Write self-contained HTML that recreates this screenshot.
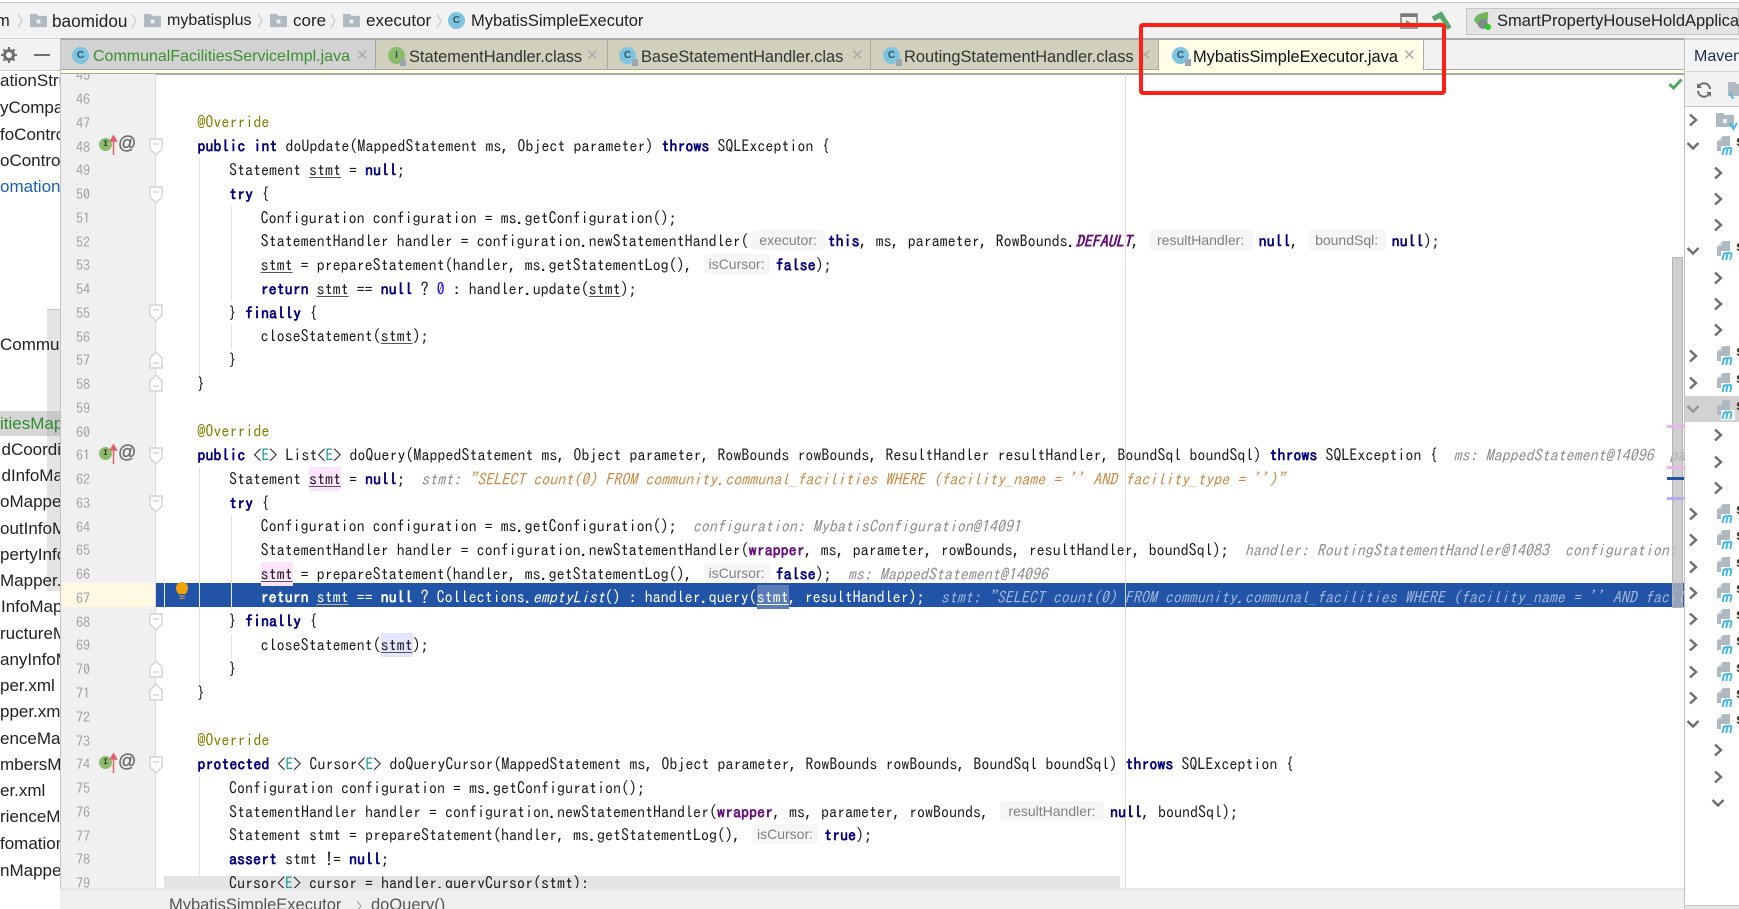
<!DOCTYPE html>
<html><head><meta charset="utf-8"><title>MybatisSimpleExecutor</title>
<style>
html,body{margin:0;padding:0;width:1739px;height:909px;overflow:hidden;background:#fff}
body{position:relative;font-family:"Liberation Sans",sans-serif;color:#222}
.a{position:absolute;white-space:pre}
.s{font-size:16.500px;line-height:20px;color:#222}
svg{position:absolute;overflow:visible}
#code{position:absolute;left:0;top:0;width:1739px;height:909px;overflow:hidden;clip-path:inset(74px 55px 21px 155px)}
.l{position:absolute;white-space:pre;left:calc(197.4px + var(--i,0)*31.6px);top:calc(86.7px + var(--n)*23.76px);font-family:"IPAGothic","Liberation Mono",monospace;font-size:16px;line-height:24px;height:24px;color:#1a1a1a}
.n{position:absolute;left:76px;width:16px;top:calc(87px + var(--n)*23.76px);font-family:"IPAGothic","Liberation Mono",monospace;font-size:14px;line-height:24px;color:#a0a0a0}
.k{color:#000080;font-weight:bold}
.an{color:#808000}
.e{color:#20999d}
.g{color:#8c8c8c;font-style:italic}
.o{color:#cc8a45;font-style:italic}
.p{color:#660e7a;font-weight:bold}
.u{text-decoration:underline;text-decoration-color:#555}
.hp{background:#fce4fc;display:inline-block;height:24px}
.hv{background:#e4e4ff;display:inline-block;height:24px}
.h{display:inline-block;height:20px;line-height:20px;background:#f6f6f6;border-radius:4px;font-family:"Liberation Sans",sans-serif;font-size:14px;color:#808080;text-align:center;vertical-align:top;margin-top:1px}
.t{position:absolute;top:40px;height:29px;background:#d0d0bc;border-right:1px solid #a9a9a0}
.tt{position:absolute;top:47px;font-size:16.400px;line-height:20px;white-space:pre;color:#333}
.x{position:absolute;top:46px;font-size:15px;line-height:20px;color:#aaa}
.ci{position:absolute;width:17px;height:17px;border-radius:50%;background:#7fc4de;font-size:10px;line-height:17px;text-align:center;font-weight:bold;color:#2c5566}
.ci.i{background:#8cbc6a}
.lk{position:absolute;width:6px;height:7px;background:#9aa7b0}
.ic{position:absolute;width:13px;height:13px;border-radius:50%;background:#8cbc6a;font:bold 8px/13px "Liberation Mono",monospace;text-align:center;color:#333;left:99px}
.at{position:absolute;left:118px;font-size:18px;line-height:20px;color:#6e6e6e;-webkit-text-stroke:.4px #6e6e6e}
.ig{position:absolute;width:1px;background:#e2e2e2}
.lt{position:absolute;left:0;width:60px;overflow:hidden;font-size:17px;line-height:22px;white-space:pre;color:#222}
.q{position:absolute;left:1736px;width:3px;height:16px;overflow:hidden;font-size:15px;line-height:16px;font-weight:bold;color:#3a3020}
</style></head><body>
<svg width="0" height="0" style="position:absolute">
<defs>
<symbol id="fd" viewBox="0 0 14 18"><path d="M1 1H13V11L7 17L1 11Z" fill="#fff" stroke="#d2d2d2" stroke-width="1.4"/><path d="M4 6H10" stroke="#c0c0c0"/></symbol>
<symbol id="fu" viewBox="0 0 14 18"><path d="M1 17H13V7L7 1L1 7Z" fill="#fff" stroke="#d2d2d2" stroke-width="1.4"/><path d="M4 12H10" stroke="#c0c0c0"/></symbol>
<symbol id="folder" viewBox="0 0 18 16"><path d="M0 1H7L9 3H18V15H0Z" fill="#aeb9c0"/><rect x="7" y="7" width="4" height="4" fill="#eef1f3"/></symbol>
<symbol id="cr" viewBox="0 0 10 14"><path d="M2 1.5L8 7L2 12.5" fill="none" stroke="#6e6e6e" stroke-width="2.4"/></symbol>
<symbol id="cd" viewBox="0 0 14 10"><path d="M1.5 2L7 7.5L12.5 2" fill="none" stroke="#6e6e6e" stroke-width="2.4"/></symbol>
<symbol id="mf" viewBox="0 0 18 20"><path d="M6 0H13V15H0V6Z" fill="#aeb9c0"/><path d="M5 0.500V5H0.500Z" fill="#cfd6da"/><rect x="4" y="10" width="14" height="10" fill="#fff"/><path d="M5.500 19L7 12M7 13.500Q9.500 10.500 10.500 13L9.200 19M10.500 13Q13.500 10.500 14.500 13L13.200 19" fill="none" stroke="#38b5ea" stroke-width="1.800"/></symbol>
</defs></svg>

<!-- top bar -->
<div class="a" style="left:0;top:0;width:1739px;height:38px;background:#f2f2f2;border-top:2px solid #fff;box-sizing:border-box"></div>
<div class="a" style="left:0;top:2px;width:1739px;height:1px;background:#c8c8c8"></div>
<div class="a s" style="left:0;top:11px;width:14px;overflow:hidden;text-indent:-4px">m</div>
<svg style="left:17px;top:13px" width="6" height="16"><path d="M1 1L5 8L1 15" fill="none" stroke="#c4c4c4"/></svg>
<svg style="left:30px;top:13px" width="17" height="15"><use href="#folder"/></svg><div class="a s" style="left:52px;top:11px;font-size:17.200px">baomidou</div>
<svg style="left:131px;top:13px" width="6" height="16"><path d="M1 1L5 8L1 15" fill="none" stroke="#c4c4c4"/></svg>
<svg style="left:144px;top:13px" width="17" height="15"><use href="#folder"/></svg><div class="a s" style="left:167px;top:11px;font-size:16px">mybatisplus</div>
<svg style="left:257px;top:13px" width="6" height="16"><path d="M1 1L5 8L1 15" fill="none" stroke="#c4c4c4"/></svg>
<svg style="left:270px;top:13px" width="17" height="15"><use href="#folder"/></svg><div class="a s" style="left:293px;top:11px;font-size:17px">core</div>
<svg style="left:330px;top:13px" width="6" height="16"><path d="M1 1L5 8L1 15" fill="none" stroke="#c4c4c4"/></svg>
<svg style="left:343px;top:13px" width="17" height="15"><use href="#folder"/></svg><div class="a s" style="left:366px;top:11px;font-size:17px">executor</div>
<svg style="left:436px;top:13px" width="6" height="16"><path d="M1 1L5 8L1 15" fill="none" stroke="#c4c4c4"/></svg>
<div class="ci" style="left:448px;top:12px">C</div><div class="a s" style="left:471px;top:11px">MybatisSimpleExecutor</div>
<svg style="left:1400px;top:13px" width="18" height="16"><rect x="1" y="1" width="16" height="14" fill="none" stroke="#7a7a7a" stroke-width="1.500"/><rect x="1" y="1" width="16" height="3" fill="#7a7a7a"/><path d="M6 7L11 10L6 13Z" fill="#6aa85a"/></svg>
<svg style="left:1432px;top:12px" width="20" height="20"><path d="M1 7L11 1.500" fill="none" stroke="#59a869" stroke-width="5"/><path d="M9 3L17.500 16.500" fill="none" stroke="#59a869" stroke-width="5"/></svg>
<div class="a" style="left:1466px;top:8px;width:273px;height:27px;background:#e4e4e4;border:1px solid #c4c4c4;box-sizing:border-box"></div>
<svg style="left:1473px;top:11px" width="20" height="20"><path d="M1 9Q3 2 15 1Q16 10 12 14Q5 17 1 9Z" fill="#6fb35a"/><circle cx="10" cy="13" r="5" fill="#7d8a92"/><circle cx="15" cy="16" r="3" fill="#22cc22"/></svg>
<div class="a s" style="left:1497px;top:11px;width:242px;overflow:hidden">SmartPropertyHouseHoldApplication</div>

<!-- left panel -->
<div class="a" style="left:0;top:38px;width:60px;height:33px;background:#f2f2f2;border-top:1px solid #d4d4d4;box-sizing:border-box"></div>
<div class="a" style="left:0;top:70px;width:60px;height:1px;background:#c8c8c8"></div>
<svg style="left:1px;top:47px" width="16" height="16"><circle cx="8" cy="8" r="4.500" fill="none" stroke="#6e6e6e" stroke-width="3"/><path d="M8 0V16M0 8H16M2.300 2.300L13.700 13.700M13.700 2.300L2.300 13.700" stroke="#6e6e6e" stroke-width="2" stroke-dasharray="2.500 11"/></svg>
<div class="a" style="left:34px;top:54px;width:16px;height:2px;background:#6e6e6e"></div>
<div class="a" style="left:47px;top:309px;width:13px;height:282px;background:#e4e4e4;border-top:1px solid #c8c8c8;box-sizing:border-box"></div>
<div class="a" style="left:0;top:411px;width:60px;height:25px;background:#d6d6d6"></div>
<div class="a" style="left:47px;top:411px;width:13px;height:25px;background:#c8c8c8"></div>
<div class="lt" style="top:70px">ationStructure</div>
<div class="lt" style="top:97px">yCompany</div>
<div class="lt" style="top:124px">foController</div>
<div class="lt" style="top:150px">oController</div>
<div class="lt" style="top:176px;color:#1a5fb4">omation</div>
<div class="lt" style="top:334px">Communal</div>
<div class="lt" style="top:413px;color:#2e8b2e">itiesMapper</div>
<div class="lt" style="top:439px;text-indent:1.500px">dCoordinate</div>
<div class="lt" style="top:465px;text-indent:1.500px">dInfoMapper</div>
<div class="lt" style="top:491px">oMapper.xml</div>
<div class="lt" style="top:518px">outInfoMapper</div>
<div class="lt" style="top:544px">pertyInfoMapper</div>
<div class="lt" style="top:570px">Mapper.xml</div>
<div class="lt" style="top:596px;text-indent:1px">InfoMapper</div>
<div class="lt" style="top:623px">ructureMapper</div>
<div class="lt" style="top:649px">anyInfoMapper</div>
<div class="lt" style="top:675px">per.xml</div>
<div class="lt" style="top:701px">pper.xml</div>
<div class="lt" style="top:728px">enceMapper</div>
<div class="lt" style="top:754px">mbersMapper</div>
<div class="lt" style="top:780px">er.xml</div>
<div class="lt" style="top:806px">rienceMapper</div>
<div class="lt" style="top:833px">fomationMapper</div>
<div class="lt" style="top:860px">nMapper</div>

<!-- tab strip -->
<div class="a" style="left:60px;top:38px;width:1624px;height:33px;background:#f2f2f2"></div>
<div class="t" style="left:60px;width:315px;background:#d2d2d2"></div>
<div class="t" style="left:376px;width:231px"></div>
<div class="t" style="left:608px;width:262px"></div>
<div class="t" style="left:871px;width:287px"></div>
<div class="a" style="left:1159px;top:40px;width:265px;height:32px;background:#ffffe8;border-right:1px solid #aaa;box-sizing:border-box"></div>
<div class="a" style="left:60px;top:38px;width:1624px;height:2px;background:#a8a8a8"></div>
<div class="a" style="left:60px;top:69px;width:1099px;height:1px;background:#a8a8a8"></div>
<div class="a" style="left:1425px;top:69px;width:259px;height:1px;background:#a8a8a8"></div>
<div class="a" style="left:60px;top:70px;width:1624px;height:3px;background:#ffffe4"></div>
<div class="a" style="left:60px;top:73px;width:1624px;height:1.500px;background:#a8a8a8"></div>

<div class="ci" style="left:72px;top:47px">C</div>
<div class="tt" style="left:93px;color:#3c8f2f;font-size:16px">CommunalFacilitiesServiceImpl.java</div><div class="x" style="left:356px">✕</div>
<div class="ci i" style="left:388px;top:47px">I</div><div class="lk" style="left:400px;top:59px"></div>
<div class="tt" style="left:409px">StatementHandler.class</div><div class="x" style="left:586px">✕</div>
<div class="ci" style="left:619px;top:47px">C</div><div class="lk" style="left:632px;top:59px"></div>
<div class="tt" style="left:641px;width:203px;overflow:hidden">BaseStatementHandler.class</div><div class="x" style="left:851px">✕</div>
<div class="ci" style="left:883px;top:47px">C</div><div class="lk" style="left:896px;top:59px"></div>
<div class="tt" style="left:904px">RoutingStatementHandler.class</div><div class="x" style="left:1139px">✕</div>
<div class="ci" style="left:1172px;top:47px">C</div><div class="lk" style="left:1185px;top:59px"></div>
<div class="tt" style="left:1193px;color:#111">MybatisSimpleExecutor.java</div><div class="x" style="left:1403px">✕</div>

<!-- gutter -->
<div class="a" style="left:60px;top:74px;width:95px;height:814px;background:#f0f0f0"></div>
<div class="a" style="left:60px;top:583px;width:95px;height:24px;background:#fff8e2"></div>
<div class="a" style="left:155px;top:74px;width:1px;height:814px;background:#dcdcdc"></div>
<div class="a" style="left:60px;width:1px;background:#c4c4c4;top:38px;height:871px"></div>
<div style="position:absolute;left:0;top:0;width:1739px;height:909px;clip-path:inset(74px 0 21px 0)">
<div class="n" style="--n:-1">45</div><div class="n" style="--n:0">46</div><div class="n" style="--n:1">47</div><div class="n" style="--n:2">48</div><div class="n" style="--n:3">49</div><div class="n" style="--n:4">50</div><div class="n" style="--n:5">51</div><div class="n" style="--n:6">52</div><div class="n" style="--n:7">53</div><div class="n" style="--n:8">54</div><div class="n" style="--n:9">55</div><div class="n" style="--n:10">56</div><div class="n" style="--n:11">57</div><div class="n" style="--n:12">58</div><div class="n" style="--n:13">59</div><div class="n" style="--n:14">60</div><div class="n" style="--n:15">61</div><div class="n" style="--n:16">62</div><div class="n" style="--n:17">63</div><div class="n" style="--n:18">64</div><div class="n" style="--n:19">65</div><div class="n" style="--n:20">66</div><div class="n" style="--n:21">67</div><div class="n" style="--n:22">68</div><div class="n" style="--n:23">69</div><div class="n" style="--n:24">70</div><div class="n" style="--n:25">71</div><div class="n" style="--n:26">72</div><div class="n" style="--n:27">73</div><div class="n" style="--n:28">74</div><div class="n" style="--n:29">75</div><div class="n" style="--n:30">76</div><div class="n" style="--n:31">77</div><div class="n" style="--n:32">78</div><div class="n" style="--n:33">79</div>
</div>
<!-- gutter marks -->
<div class="ic" style="top:138px">I</div><svg style="left:110px;top:135px" width="7" height="20"><path d="M3.500 20V2M0.500 6L3.500 1L6.500 6Z" stroke="#e0606a" stroke-width="1.500" fill="#e0606a"/></svg><div class="at" style="top:133px">@</div>
<div class="ic" style="top:447px">I</div><svg style="left:110px;top:444px" width="7" height="20"><path d="M3.500 20V2M0.500 6L3.500 1L6.500 6Z" stroke="#e0606a" stroke-width="1.500" fill="#e0606a"/></svg><div class="at" style="top:442px">@</div>
<div class="ic" style="top:756px">I</div><svg style="left:110px;top:753px" width="7" height="20"><path d="M3.500 20V2M0.500 6L3.500 1L6.500 6Z" stroke="#e0606a" stroke-width="1.500" fill="#e0606a"/></svg><div class="at" style="top:751px">@</div>
<svg style="left:149px;top:138px" width="14" height="18"><use href="#fd"/></svg>
<svg style="left:149px;top:186px" width="14" height="18"><use href="#fd"/></svg>
<svg style="left:149px;top:304px" width="14" height="18"><use href="#fd"/></svg>
<svg style="left:149px;top:351px" width="14" height="18"><use href="#fu"/></svg>
<svg style="left:149px;top:374px" width="14" height="18"><use href="#fu"/></svg>
<svg style="left:149px;top:447px" width="14" height="18"><use href="#fd"/></svg>
<svg style="left:149px;top:495px" width="14" height="18"><use href="#fd"/></svg>
<svg style="left:149px;top:613px" width="14" height="18"><use href="#fd"/></svg>
<svg style="left:149px;top:660px" width="14" height="18"><use href="#fu"/></svg>
<svg style="left:149px;top:683px" width="14" height="18"><use href="#fu"/></svg>
<svg style="left:149px;top:756px" width="14" height="18"><use href="#fd"/></svg>

<!-- code -->
<div id="code">
<div class="a" style="left:1125px;top:74px;width:1px;height:814px;background:#dcdcdc"></div>
<div class="a" style="left:164px;top:876px;width:956px;height:12px;background:#e4e4e4"></div>
<div class="a" style="left:156px;top:583px;width:1530px;height:24px;background:#2154a6"></div>
<div class="a" style="left:1125px;top:583px;width:1px;height:24px;background:#cfd8e8"></div>
<div class="a" style="left:164px;top:583px;width:1px;height:24px;background:#e8edf6"></div>
<div class="ig" style="left:199px;top:158px;height:220px"></div>
<div class="ig" style="left:231px;top:206px;height:95px"></div>
<div class="ig" style="left:231px;top:325px;height:24px"></div>
<div class="ig" style="left:199px;top:467px;height:220px;background:#e2e2e2"></div>
<div class="ig" style="left:231px;top:515px;height:95px"></div>
<div class="ig" style="left:231px;top:634px;height:24px"></div>
<div class="ig" style="left:199px;top:776px;height:112px"></div>
<div class="a" style="left:199px;top:583px;width:1px;height:24px;background:#e8edf6"></div>
<div class="a" style="left:231px;top:583px;width:1px;height:24px;background:#e8edf6"></div>
<svg style="left:176px;top:582px" width="12" height="18"><path d="M6 0A6 6 0 0 1 12 6Q12 9 9.500 12H2.500Q0 9 0 6A6 6 0 0 1 6 0Z" fill="#f0a30a"/><rect x="3" y="13" width="6" height="1.500" fill="#a88a50"/><rect x="3.500" y="15.500" width="5" height="1.500" fill="#a88a50"/></svg>

<div class="l an" style="--n:1">@Override</div>
<div class="l" style="--n:2"><span class="k">public int</span> doUpdate(MappedStatement ms, Object parameter) <span class="k">throws</span> SQLException {</div>
<div class="l" style="--n:3;--i:1">Statement <span class="u">stmt</span> = <span class="k">null</span>;</div>
<div class="l" style="--n:4;--i:1"><span class="k">try</span> {</div>
<div class="l" style="--n:5;--i:2">Configuration configuration = ms.getConfiguration();</div>
<div class="l" style="--n:6;--i:2">StatementHandler handler = configuration.newStatementHandler(<span class="h" style="width:73px;margin:1px 3px 0 3px">executor:</span><span class="k">this</span>, ms, parameter, RowBounds.<span class="p" style="font-style:italic">DEFAULT</span>, <span class="h" style="width:104px;margin:1px 6px 0 1px">resultHandler:</span><span class="k">null</span>, <span class="h" style="width:78px;margin:1px 6px 0 1px">boundSql:</span><span class="k">null</span>);</div>
<div class="l" style="--n:7;--i:2"><span class="u">stmt</span> = prepareStatement(handler, ms.getStatementLog(), <span class="h" style="width:66px;margin:1px 6px 0 3px">isCursor:</span><span class="k">false</span>);</div>
<div class="l" style="--n:8;--i:2"><span class="k">return</span> <span class="u">stmt</span> == <span class="k">null</span> ? <span style="color:#0000ff">0</span> : handler.update(<span class="u">stmt</span>);</div>
<div class="l" style="--n:9;--i:1">} <span class="k">finally</span> {</div>
<div class="l" style="--n:10;--i:2">closeStatement(<span class="u">stmt</span>);</div>
<div class="l" style="--n:11;--i:1">}</div>
<div class="l" style="--n:12">}</div>
<div class="l an" style="--n:14">@Override</div>
<div class="l" style="--n:15"><span class="k">public</span> &lt;<span class="e">E</span>&gt; List&lt;<span class="e">E</span>&gt; doQuery(MappedStatement ms, Object parameter, RowBounds rowBounds, ResultHandler resultHandler, BoundSql boundSql) <span class="k">throws</span> SQLException {  <span class="g">ms: MappedStatement@14096  parameter: null</span></div>
<div class="l" style="--n:16;--i:1">Statement <span class="u hp">stmt</span> = <span class="k">null</span>;  <span class="g">stmt: </span><span class="o">"SELECT count(0) FROM community.communal_facilities WHERE (facility_name = '' AND facility_type = '')"</span></div>
<div class="l" style="--n:17;--i:1"><span class="k">try</span> {</div>
<div class="l" style="--n:18;--i:2">Configuration configuration = ms.getConfiguration();  <span class="g">configuration: MybatisConfiguration@14091</span></div>
<div class="l" style="--n:19;--i:2">StatementHandler handler = configuration.newStatementHandler(<span class="p">wrapper</span>, ms, parameter, rowBounds, resultHandler, boundSql);  <span class="g">handler: RoutingStatementHandler@14083  configuration: MybatisConfiguration</span></div>
<div class="l" style="--n:20;--i:2"><span class="u hp">stmt</span> = prepareStatement(handler, ms.getStatementLog(), <span class="h" style="width:66px;margin:1px 6px 0 3px">isCursor:</span><span class="k">false</span>);  <span class="g">ms: MappedStatement@14096</span></div>
<div class="l" style="--n:21;--i:2;color:#fff;margin-top:-1px"><span style="font-weight:bold">return</span> <span style="text-decoration:underline;text-decoration-color:#d0b080">stmt</span> == <span style="font-weight:bold">null</span> ? Collections.<i>emptyList</i>() : handler.query(<span style="background:#5b7db8;text-decoration:underline;display:inline-block;height:24px">stmt</span>, resultHandler);  <span style="color:#9fb4d8;font-style:italic">stmt: "SELECT count(0) FROM community.communal_facilities WHERE (facility_name = '' AND facility_type = '')"</span></div>
<div class="l" style="--n:22;--i:1">} <span class="k">finally</span> {</div>
<div class="l" style="--n:23;--i:2">closeStatement(<span class="u hv">stmt</span>);</div>
<div class="l" style="--n:24;--i:1">}</div>
<div class="l" style="--n:25">}</div>
<div class="l an" style="--n:27">@Override</div>
<div class="l" style="--n:28"><span class="k">protected</span> &lt;<span class="e">E</span>&gt; Cursor&lt;<span class="e">E</span>&gt; doQueryCursor(MappedStatement ms, Object parameter, RowBounds rowBounds, BoundSql boundSql) <span class="k">throws</span> SQLException {</div>
<div class="l" style="--n:29;--i:1">Configuration configuration = ms.getConfiguration();</div>
<div class="l" style="--n:30;--i:1">StatementHandler handler = configuration.newStatementHandler(<span class="p">wrapper</span>, ms, parameter, rowBounds, <span class="h" style="width:104px;margin:1px 6px 0 3px">resultHandler:</span><span class="k">null</span>, boundSql);</div>
<div class="l" style="--n:31;--i:1">Statement stmt = prepareStatement(handler, ms.getStatementLog(), <span class="h" style="width:66px;margin:1px 6px 0 3px">isCursor:</span><span class="k">true</span>);</div>
<div class="l" style="--n:32;--i:1"><span class="k">assert</span> stmt != <span class="k">null</span>;</div>
<div class="l" style="--n:33;--i:1">Cursor&lt;<span class="e">E</span>&gt; cursor = handler.queryCursor(stmt);</div>
</div>

<!-- editor scrollbar -->
<div class="a" style="left:1672px;top:257px;width:11px;height:351px;background:rgba(190,190,190,.75);border:1px solid #b4b4b4;box-sizing:border-box"></div>
<div class="a" style="left:1667px;top:425px;width:17px;height:2.500px;background:#ecb4ec"></div>
<div class="a" style="left:1667px;top:466px;width:17px;height:2.500px;background:#ecb4ec"></div>
<div class="a" style="left:1667px;top:477px;width:17px;height:3px;background:#2154a6"></div>
<div class="a" style="left:1667px;top:497px;width:17px;height:2.500px;background:#b8aaf0"></div>
<svg style="left:1668px;top:78px" width="15" height="12"><path d="M1.500 6L5.500 10L13.500 1.500" fill="none" stroke="#4fa862" stroke-width="3"/></svg>

<!-- bottom nav bar -->
<div class="a" style="left:60px;top:888px;width:1624px;height:21px;background:#efefef;border-top:2px solid #e4e4e4;box-sizing:border-box;overflow:hidden"></div>
<div class="a" style="left:169px;top:895px;font-size:16.500px;line-height:20px;color:#555;height:14px;overflow:hidden">MybatisSimpleExecutor</div>
<svg style="left:356px;top:900px" width="6" height="9"><path d="M1 1L5 6L1 11" fill="none" stroke="#999"/></svg>
<div class="a" style="left:371px;top:895px;font-size:16.500px;line-height:20px;color:#555;height:14px;overflow:hidden">doQuery()</div>

<!-- right panel -->
<div class="a" style="left:1684px;top:38px;width:55px;height:871px;background:#fff;border-left:1px solid #c0c0c0;box-sizing:border-box"></div>
<div class="a" style="left:1685px;top:38px;width:54px;height:33px;background:#f4f4f4;border-top:2px solid #d0d0d0;box-sizing:border-box"></div>
<div class="a" style="left:1694px;top:47px;font-size:16px;line-height:20px;color:#18304c;width:45px;overflow:hidden">Maven</div>
<div class="a" style="left:1685px;top:71px;width:54px;height:36px;background:#f2f2f2;border-top:1px solid #d4d4d4;border-bottom:1px solid #c8c8c8;box-sizing:border-box"></div>
<svg style="left:1696px;top:82px" width="16" height="16" viewBox="0 0 16 16"><path d="M14 7A6 6 0 0 0 3 4M2 9A6 6 0 0 0 13 12" fill="none" stroke="#6e6e6e" stroke-width="2"/><path d="M1 1V6H6ZM15 15V10H10Z" fill="#6e6e6e"/></svg>
<svg style="left:1728px;top:82px;overflow:hidden" width="11" height="18"><path d="M0 0H7L9 2H18V14H0Z" fill="#aeb9c0"/><path d="M3 10Q3 16 6 16" stroke="#38b5ea" fill="none" stroke-width="1.500"/></svg>
<div class="a" style="left:1685px;top:396px;width:54px;height:26px;background:#d2d2d2"></div>
<div class="a" style="left:1685px;top:905px;width:54px;height:4px;background:#e4e4e4;border-top:1px solid #c8c8c8;box-sizing:border-box"></div>

<svg style="left:1688px;top:113px" width="10" height="14"><use href="#cr"/></svg>
<svg style="left:1716px;top:112px" width="18" height="16"><use href="#folder"/></svg><svg style="left:1729px;top:122px" width="9" height="8"><path d="M1 1L4.500 7L8 1" fill="none" stroke="#38b5ea" stroke-width="1.800"/></svg>
<svg style="left:1686px;top:141px" width="14" height="10"><use href="#cd"/></svg>
<svg style="left:1717px;top:136px" width="18" height="20"><use href="#mf"/></svg><div class="q" style="top:134px">s</div>
<svg style="left:1713px;top:166px" width="10" height="14"><use href="#cr"/></svg>
<svg style="left:1713px;top:192px" width="10" height="14"><use href="#cr"/></svg>
<svg style="left:1713px;top:218px" width="10" height="14"><use href="#cr"/></svg>
<svg style="left:1686px;top:246px" width="14" height="10"><use href="#cd"/></svg>
<svg style="left:1717px;top:241px" width="18" height="20"><use href="#mf"/></svg><div class="q" style="top:239px">s</div>
<svg style="left:1713px;top:271px" width="10" height="14"><use href="#cr"/></svg>
<svg style="left:1713px;top:297px" width="10" height="14"><use href="#cr"/></svg>
<svg style="left:1713px;top:323px" width="10" height="14"><use href="#cr"/></svg>
<svg style="left:1688px;top:349px" width="10" height="14"><use href="#cr"/></svg>
<svg style="left:1717px;top:346px" width="18" height="20"><use href="#mf"/></svg><div class="q" style="top:344px">s</div>
<svg style="left:1688px;top:376px" width="10" height="14"><use href="#cr"/></svg>
<svg style="left:1717px;top:373px" width="18" height="20"><use href="#mf"/></svg><div class="q" style="top:371px">s</div>
<svg style="left:1686px;top:404px;opacity:.6" width="14" height="10"><use href="#cd"/></svg>
<svg style="left:1717px;top:400px" width="18" height="20"><use href="#mf"/></svg><div class="q" style="top:398px">s</div>
<svg style="left:1713px;top:428px" width="10" height="14"><use href="#cr"/></svg>
<svg style="left:1713px;top:455px" width="10" height="14"><use href="#cr"/></svg>
<svg style="left:1713px;top:481px" width="10" height="14"><use href="#cr"/></svg>
<svg style="left:1688px;top:507px" width="10" height="14"><use href="#cr"/></svg>
<svg style="left:1717px;top:504px" width="18" height="20"><use href="#mf"/></svg><div class="q" style="top:502px">s</div>
<svg style="left:1688px;top:533px" width="10" height="14"><use href="#cr"/></svg>
<svg style="left:1717px;top:530px" width="18" height="20"><use href="#mf"/></svg><div class="q" style="top:528px">s</div>
<svg style="left:1688px;top:560px" width="10" height="14"><use href="#cr"/></svg>
<svg style="left:1717px;top:557px" width="18" height="20"><use href="#mf"/></svg><div class="q" style="top:555px">s</div>
<svg style="left:1688px;top:586px" width="10" height="14"><use href="#cr"/></svg>
<svg style="left:1717px;top:583px" width="18" height="20"><use href="#mf"/></svg><div class="q" style="top:581px">s</div>
<svg style="left:1688px;top:612px" width="10" height="14"><use href="#cr"/></svg>
<svg style="left:1717px;top:609px" width="18" height="20"><use href="#mf"/></svg><div class="q" style="top:607px">s</div>
<svg style="left:1688px;top:638px" width="10" height="14"><use href="#cr"/></svg>
<svg style="left:1717px;top:635px" width="18" height="20"><use href="#mf"/></svg><div class="q" style="top:633px">s</div>
<svg style="left:1688px;top:665px" width="10" height="14"><use href="#cr"/></svg>
<svg style="left:1717px;top:662px" width="18" height="20"><use href="#mf"/></svg><div class="q" style="top:660px">s</div>
<svg style="left:1688px;top:691px" width="10" height="14"><use href="#cr"/></svg>
<svg style="left:1717px;top:688px" width="18" height="20"><use href="#mf"/></svg><div class="q" style="top:686px">s</div>
<svg style="left:1686px;top:719px" width="14" height="10"><use href="#cd"/></svg>
<svg style="left:1717px;top:714px" width="18" height="20"><use href="#mf"/></svg><div class="q" style="top:712px">s</div>
<svg style="left:1713px;top:743px" width="10" height="14"><use href="#cr"/></svg>
<svg style="left:1713px;top:770px" width="10" height="14"><use href="#cr"/></svg>
<svg style="left:1711px;top:798px" width="14" height="10"><use href="#cd"/></svg>

<!-- red annotation box -->
<div class="a" style="left:1139px;top:23px;width:307px;height:72px;border:4px solid #ff1f14;border-radius:4px;box-sizing:border-box"></div>
</body></html>
